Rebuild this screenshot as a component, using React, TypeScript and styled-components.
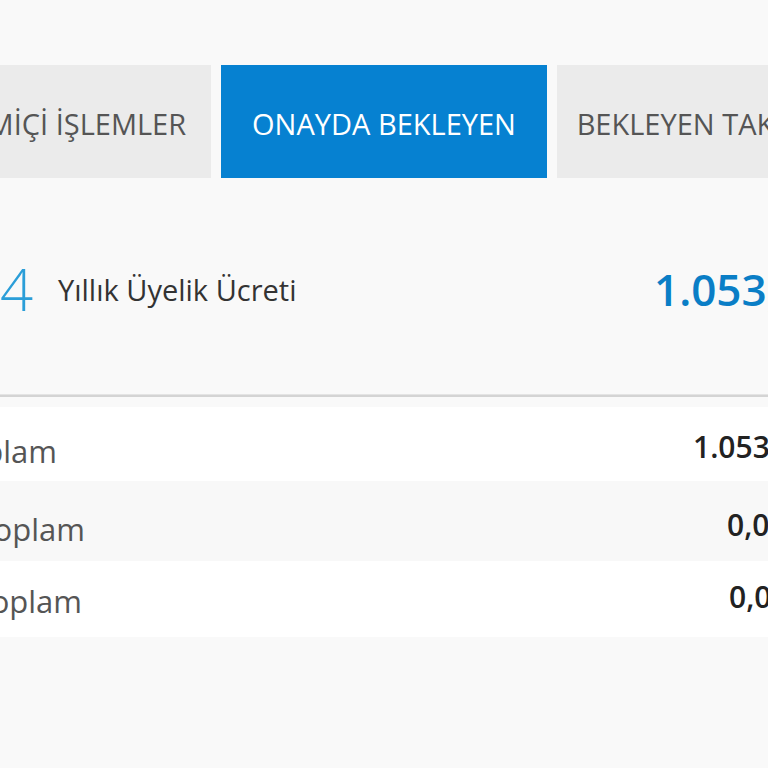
import React from "react";
import styled, { createGlobalStyle } from "styled-components";

const Global = createGlobalStyle`
  html, body {
    margin: 0;
    padding: 0;
    background: #f9f9f9;
    font-family: "Open Sans", "Noto Sans", sans-serif;
  }
`;

const Page = styled.div`
  width: 768px;
  height: 768px;
  overflow: hidden;
  background: #f9f9f9;
`;

const TabBar = styled.div`
  display: flex;
  gap: 10px;
  height: 113px;
  margin: 65px 0 0 -115px;
`;

const Tab = styled.div<{ $active?: boolean }>`
  flex: 0 0 326px;
  display: flex;
  align-items: center;
  justify-content: center;
  padding-top: 3px;
  box-sizing: border-box;
  background: ${(p) => (p.$active ? "#0681d1" : "#ebebeb")};
  color: ${(p) => (p.$active ? "#ffffff" : "#555555")};
  font-size: 29px;
  white-space: nowrap;
`;

const MainRow = styled.div`
  display: grid;
  grid-template-columns: 58px 596px auto;
  align-items: center;
  height: 216px;
  padding-top: 6px;
  box-sizing: border-box;
  white-space: nowrap;
`;

const Index = styled.span`
  font-size: 58px;
  font-weight: 300;
  line-height: 1;
  color: #2b9ed8;
`;

const Title = styled.span`
  font-size: 29px;
  color: #333333;
`;

const Amount = styled.span`
  font-size: 44px;
  font-weight: 600;
  color: #0a7ec6;
`;

const Divider = styled.div`
  height: 2px;
  background: #d4d4d4;
  border-top: 1px solid #e4e4e4;
`;

const SummaryList = styled.div`
  margin-top: 10px;
  display: flex;
  flex-direction: column;
`;

const SummaryRow = styled.div<{
  $labelEnd: number;
  $valueStart: number;
  $height: number;
  $top: number;
  $striped?: boolean;
}>`
  display: grid;
  grid-template-columns: ${(p) => p.$labelEnd}px ${(p) => p.$valueStart - p.$labelEnd}px auto;
  align-items: start;
  height: ${(p) => p.$height}px;
  padding-top: ${(p) => p.$top}px;
  box-sizing: border-box;
  background: ${(p) => (p.$striped ? "#f8f8f8" : "#ffffff")};
  white-space: nowrap;
`;

const Label = styled.div`
  display: flex;
  justify-content: flex-end;
  font-size: 31px;
  color: #555555;
`;

const Value = styled.div`
  font-size: 30px;
  font-weight: 600;
  color: #222222;
  margin-top: -4px;
`;

const rows = [
  { label: "Genel Toplam", value: "1.053,00 TL", labelEnd: 57, valueStart: 693, height: 74, top: 23 },
  { label: "Ara Toplam", value: "0,00 TL", labelEnd: 85, valueStart: 727, height: 80, top: 27, striped: true },
  { label: "KDV Toplam", value: "0,00 TL", labelEnd: 82, valueStart: 729, height: 76, top: 19 },
];

export default function App() {
  return (
    <Page>
      <Global />
      <TabBar>
        <Tab>ÇEVRİMİÇİ İŞLEMLER</Tab>
        <Tab $active>ONAYDA BEKLEYEN</Tab>
        <Tab>BEKLEYEN TAKSİTLER</Tab>
      </TabBar>
      <MainRow>
        <Index>4</Index>
        <Title>Yıllık Üyelik Ücreti</Title>
        <Amount>1.053,00 TL</Amount>
      </MainRow>
      <Divider />
      <SummaryList>
        {rows.map((r) => (
          <SummaryRow
            key={r.label}
            $labelEnd={r.labelEnd}
            $valueStart={r.valueStart}
            $height={r.height}
            $top={r.top}
            $striped={r.striped}
          >
            <Label>{r.label}</Label>
            <span />
            <Value>{r.value}</Value>
          </SummaryRow>
        ))}
      </SummaryList>
    </Page>
  );
}
